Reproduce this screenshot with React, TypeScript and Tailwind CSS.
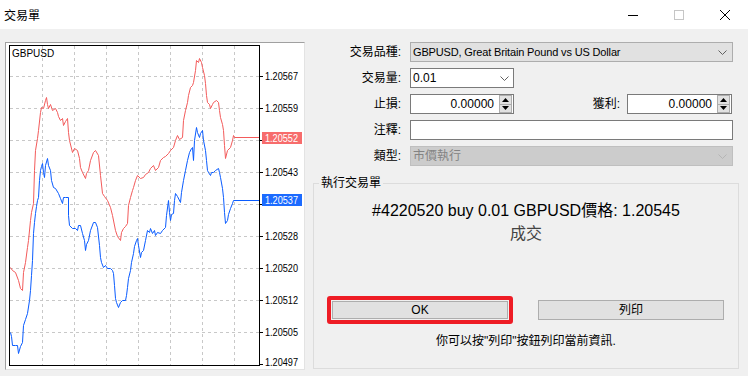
import React from "react";

const redPts: [number, number][] = [
  [10, 267], [12, 270], [15, 272], [18, 280], [20, 288], [22, 290], [23, 272], [25, 262], [27, 247], [28, 240], [30, 220],
  [31, 212], [33, 203], [34, 170], [35, 150], [37, 138], [38, 130], [40, 112], [41, 107], [43, 108], [45, 100], [46, 97],
  [47, 104], [48, 108], [50, 104], [52, 110], [55, 108], [57, 112], [58, 116], [60, 120], [62, 118], [63, 125], [65, 121],
  [67, 118], [68, 132], [69, 140], [72, 152], [74, 148], [77, 150], [79, 158], [80, 167], [82, 172], [85, 178], [86, 173],
  [88, 170], [90, 160], [93, 152], [95, 150], [98, 155], [100, 175], [102, 193], [104, 196], [107, 200], [110, 207],
  [112, 215], [115, 230], [117, 236], [120, 240], [121, 232], [123, 228], [125, 226], [127, 223], [128, 205], [130, 197],
  [132, 190], [133, 187], [135, 180], [137, 175], [140, 178], [143, 177], [145, 174], [148, 172], [150, 168], [153, 165],
  [155, 170], [158, 167], [160, 160], [163, 157], [165, 156], [168, 153], [170, 150], [173, 147], [175, 140], [177, 135],
  [179, 139], [182, 137], [183, 120], [185, 110], [187, 102], [188, 95], [190, 87], [192, 85], [193, 82], [195, 70],
  [196, 60], [198, 62], [199, 58], [201, 62], [202, 67], [204, 75], [205, 83], [206, 95], [207, 102], [209, 104],
  [210, 108], [212, 104], [213, 102], [216, 100], [218, 102], [219, 110], [220, 117], [222, 124], [223, 130], [224, 145],
  [225, 158], [227, 150], [230, 147], [232, 140], [233, 135], [234, 137], [259, 137],
];

const bluePts: [number, number][] = [
  [10, 332], [11, 336], [12, 345], [15, 345], [17, 345], [18, 353], [20, 346], [22, 342], [23, 325], [25, 319], [27, 313],
  [29, 300], [30, 290], [31, 275], [32, 260], [33, 233], [34, 222], [35, 213], [36, 206], [37, 200], [38, 197], [39, 180],
  [40, 170], [41, 166], [42, 163], [43, 172], [44, 177], [45, 165], [47, 158], [48, 165], [50, 170], [51, 180], [53, 187],
  [55, 188], [58, 193], [60, 198], [62, 203], [63, 197], [65, 197], [68, 197], [68, 215], [69, 225], [72, 228], [75, 228],
  [77, 230], [78, 225], [80, 225], [82, 233], [84, 240], [85, 250], [86, 244], [88, 240], [90, 230], [93, 222], [95, 222],
  [97, 227], [99, 245], [100, 257], [101, 262], [103, 267], [105, 265], [107, 268], [110, 268], [112, 270], [113, 273],
  [114, 285], [115, 298], [116, 302], [118, 307], [120, 302], [122, 300], [125, 300], [126, 295], [127, 287], [128, 278],
  [130, 270], [131, 262], [133, 253], [134, 246], [136, 240], [137, 238], [138, 245], [140, 257], [141, 252], [143, 250],
  [145, 240], [147, 230], [149, 232], [150, 228], [152, 233], [154, 230], [155, 235], [157, 232], [160, 233], [162, 230],
  [165, 227], [166, 215], [168, 200], [169, 212], [170, 220], [171, 214], [173, 213], [174, 200], [175, 193], [177, 196],
  [180, 202], [181, 192], [183, 180], [185, 170], [187, 160], [189, 152], [191, 148], [192, 147], [193, 160], [194, 140],
  [196, 127], [197, 132], [199, 137], [200, 133], [202, 130], [203, 140], [205, 150], [206, 160], [207, 170], [208, 172],
  [210, 175], [211, 172], [213, 172], [215, 170], [218, 168], [219, 172], [220, 177], [222, 188], [223, 197], [224, 212],
  [225, 223], [227, 220], [228, 214], [230, 208], [232, 203], [233, 200], [259, 200],
];

const toPoints = (pts: [number, number][]) => pts.map(([x, y]) => `${x + 0.5},${y + 0.5}`).join(" ");

const hGrid = [76, 108, 140, 172, 204, 236, 268, 300, 332];
const vGrid = [42, 74, 106, 138, 170, 202, 234];
const labels: [number, string][] = [
  [76, "1.20567"],
  [108, "1.20559"],
  [172, "1.20543"],
  [236, "1.20528"],
  [268, "1.20520"],
  [300, "1.20512"],
  [332, "1.20505"],
  [362, "1.20497"],
];

function Chart() {
  return (
    <div className="w-[300px] h-[328px] bg-white border-t border-l border-t-[#a0a0a0] border-l-[#a0a0a0] border-r border-b border-r-[#e3e3e3] border-b-[#e3e3e3]">
      <svg width="298" height="326" viewBox="6 43 298 326" className="block font-['Liberation_Sans',sans-serif]">
        {hGrid.map((y) => (
          <line key={"h" + y} x1={10} x2={259} y1={y + 0.5} y2={y + 0.5} stroke="#c8c8c8" strokeDasharray="3 3" />
        ))}
        {vGrid.map((x) => (
          <line key={"v" + x} x1={x + 0.5} x2={x + 0.5} y1={46} y2={365} stroke="#c8c8c8" strokeDasharray="3 3" />
        ))}
        {[...hGrid, 364].map((y) => (
          <line key={"t" + y} x1={259} x2={263} y1={y + 0.5} y2={y + 0.5} stroke="#000" />
        ))}
        <polyline points={toPoints(redPts)} fill="none" stroke="#f35b5b" strokeWidth="1" />
        <polyline points={toPoints(bluePts)} fill="none" stroke="#0a5cff" strokeWidth="1" />
        <rect x={9.5} y={45.5} width={250} height={320} fill="none" stroke="#000" />
        <text x={12} y={57} fontSize="10" fill="#000">GBPUSD</text>
        {labels.map(([y, t]) => (
          <text key={t} x={265} y={y + 4} fontSize="10" textLength={33} lengthAdjust="spacingAndGlyphs" fill="#000">{t}</text>
        ))}
        <rect x={262} y={132} width={40} height={12} fill="#f76c6c" />
        <text x={265} y={142} fontSize="10" textLength={33} lengthAdjust="spacingAndGlyphs" fill="#fff">1.20552</text>
        <rect x={262} y={194} width={40} height={12} fill="#1c6bff" />
        <text x={265} y={204} fontSize="10" textLength={33} lengthAdjust="spacingAndGlyphs" fill="#fff">1.20537</text>
      </svg>
    </div>
  );
}

function Chevron({ color = "#606060" }: { color?: string }) {
  return (
    <svg width="9" height="5" viewBox="0 0 9 5" className="block">
      <path d="M0.5 0.5 L4.5 4.5 L8.5 0.5" fill="none" stroke={color} strokeWidth="1" />
    </svg>
  );
}

function Spinner() {
  return (
    <div className="flex flex-col w-[13px] h-[18px] mr-[1px] border border-[#adadad] bg-[#e1e1e1]">
      <div className="flex-1 flex items-center justify-center border-b border-[#adadad]">
        <svg width="7" height="4" viewBox="0 0 7 4"><path d="M0 4 L3.5 0 L7 4 Z" fill="#000" /></svg>
      </div>
      <div className="flex-1 flex items-center justify-center">
        <svg width="7" height="4" viewBox="0 0 7 4"><path d="M0 0 L3.5 4 L7 0 Z" fill="#000" /></svg>
      </div>
    </div>
  );
}

function Label({ children, w = "w-[88px]" }: { children: React.ReactNode; w?: string }) {
  return <div className={`${w} text-right text-[12px] text-black`}>{children}</div>;
}

export default function App() {
  return (
    <div className="w-[748px] h-[376px] bg-[#f0f0f0] font-['Liberation_Sans','Noto_Sans_CJK_TC',sans-serif] text-black overflow-hidden">
      <div className="h-[29px] bg-white flex items-center pl-[4px]">
        <span className="text-[12px] font-['Noto_Sans_CJK_TC',sans-serif]">交易單</span>
        <div className="ml-auto flex items-center h-full">
          <div className="w-[46px] h-full flex items-center justify-center">
            <svg width="10" height="10" viewBox="0 0 10 10"><line x1="0" x2="10" y1="5.5" y2="5.5" stroke="#000" /></svg>
          </div>
          <div className="w-[46px] h-full flex items-center justify-center">
            <svg width="10" height="10" viewBox="0 0 10 10"><rect x="0.5" y="0.5" width="9" height="9" fill="none" stroke="#c6c6c6" /></svg>
          </div>
          <div className="w-[46px] h-full flex items-center justify-center">
            <svg width="10" height="10" viewBox="0 0 10 10"><path d="M0 0 L10 10 M10 0 L0 10" stroke="#000" strokeWidth="1" /></svg>
          </div>
        </div>
      </div>

      <div className="flex pt-[13px] pl-[5px]">
        <Chart />

        <div className="ml-[8px] w-[426px] flex flex-col">
          <div className="flex flex-col gap-[6px]">
            <div className="flex items-center h-[20px]">
              <Label>交易品種:</Label>
              <div className="ml-[9px] w-[323px] h-[20px] bg-[#e1e1e1] border border-[#adadad] flex items-center pl-[2px] pr-[5px] text-[11px] tracking-[-0.15px]">
                <span>GBPUSD, Great Britain Pound vs US Dollar</span>
                <span className="ml-auto"><Chevron /></span>
              </div>
            </div>
            <div className="flex items-center h-[20px]">
              <Label>交易量:</Label>
              <div className="ml-[9px] w-[104px] h-[20px] bg-white border border-[#7a7a7a] flex items-center pl-[2px] pr-[4px] text-[12px]">
                <span>0.01</span>
                <span className="ml-auto"><Chevron /></span>
              </div>
            </div>
            <div className="flex items-center h-[20px]">
              <Label>止損:</Label>
              <div className="ml-[9px] w-[104px] h-[20px] bg-white border border-[#7a7a7a] flex items-center justify-end text-[12px]">
                <span className="mr-[5px]">0.00000</span>
                <Spinner />
              </div>
              <Label w="w-[106px]">獲利:</Label>
              <div className="ml-[7px] w-[105px] h-[20px] bg-white border border-[#7a7a7a] flex items-center justify-end text-[12px]">
                <span className="mr-[5px]">0.00000</span>
                <Spinner />
              </div>
            </div>
            <div className="flex items-center h-[20px]">
              <Label>注釋:</Label>
              <div className="ml-[9px] w-[323px] h-[20px] bg-white border border-[#7a7a7a]" />
            </div>
            <div className="flex items-center h-[20px]">
              <Label>類型:</Label>
              <div className="ml-[9px] w-[323px] h-[20px] bg-[#cccccc] border border-[#bfbfbf] flex items-center pl-[2px] pr-[5px] text-[12px] text-[#838383]">
                <span>市價執行</span>
                <span className="ml-auto"><Chevron color="#b5b5b5" /></span>
              </div>
            </div>
          </div>

          <fieldset className="mt-[9px] h-[194px] border border-[#dcdcdc] flex flex-col">
            <legend className="ml-[5px] px-[2px] text-[12px] leading-[16px]">執行交易單</legend>
            <div className="flex flex-col items-center pt-[10px]">
              <div className="text-[16px] leading-[20px]">#4220520 buy 0.01 GBPUSD價格: 1.20545</div>
              <div className="mt-[3px] text-[16px] leading-[20px] text-[#444]">成交</div>
            </div>
            <div className="mt-[52px] flex items-center pl-[13px]">
              <div className="w-[186px] h-[28px] border-[4px] border-[#ee1c25] rounded-[3px] p-[1px] flex">
                <div className="flex-1 bg-[#e1e1e1] border border-[#adadad] flex items-center justify-center text-[12px]">OK</div>
              </div>
              <div className="ml-[25px] w-[186px] h-[20px] bg-[#e1e1e1] border border-[#adadad] flex items-center justify-center text-[12px]">列印</div>
            </div>
            <div className="mt-[9px] text-center text-[12px] leading-[16px]">你可以按"列印"按鈕列印當前資訊.</div>
          </fieldset>
        </div>
      </div>
    </div>
  );
}
